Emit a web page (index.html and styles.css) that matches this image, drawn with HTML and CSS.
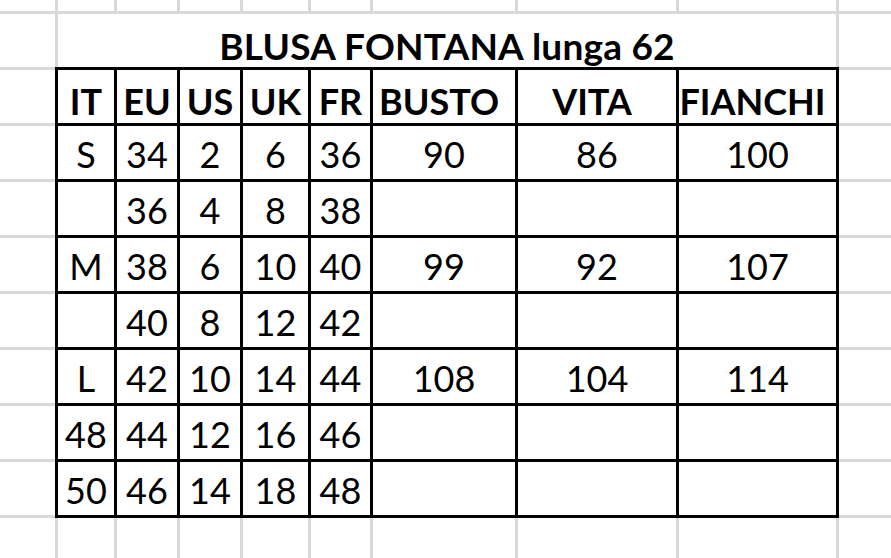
FILE: index.html
```html
<!DOCTYPE html>
<html lang="it">
<head>
<meta charset="utf-8">
<title>BLUSA FONTANA lunga 62</title>
<link rel="stylesheet" href="styles.css">
</head>
<body>
<div class="sheet">
  <div class="title">BLUSA FONTANA lunga 62</div>
  <div class="table">
    <div class="cell head">IT</div><div class="cell head">EU</div><div class="cell head">US</div><div class="cell head">UK</div><div class="cell head">FR</div><div class="cell head wide">BUSTO</div><div class="cell head wide">VITA</div><div class="cell head wide">FIANCHI</div>

    <div class="cell">S</div><div class="cell">34</div><div class="cell">2</div><div class="cell">6</div><div class="cell">36</div><div class="cell">90</div><div class="cell">86</div><div class="cell">100</div>

    <div class="cell"></div><div class="cell">36</div><div class="cell">4</div><div class="cell">8</div><div class="cell">38</div><div class="cell"></div><div class="cell"></div><div class="cell"></div>

    <div class="cell">M</div><div class="cell">38</div><div class="cell">6</div><div class="cell">10</div><div class="cell">40</div><div class="cell">99</div><div class="cell">92</div><div class="cell">107</div>

    <div class="cell"></div><div class="cell">40</div><div class="cell">8</div><div class="cell">12</div><div class="cell">42</div><div class="cell"></div><div class="cell"></div><div class="cell"></div>

    <div class="cell">L</div><div class="cell">42</div><div class="cell">10</div><div class="cell">14</div><div class="cell">44</div><div class="cell">108</div><div class="cell">104</div><div class="cell">114</div>

    <div class="cell">48</div><div class="cell">44</div><div class="cell">12</div><div class="cell">16</div><div class="cell">46</div><div class="cell"></div><div class="cell"></div><div class="cell"></div>

    <div class="cell">50</div><div class="cell">46</div><div class="cell">14</div><div class="cell">18</div><div class="cell">48</div><div class="cell"></div><div class="cell"></div><div class="cell"></div>
  </div>
</div>
</body>
</html>
```

FILE: styles.css
```css
html, body {
  margin: 0;
  padding: 0;
  background: #ffffff;
}

.sheet {
  box-sizing: border-box;
  width: 891px;
  height: 558px;
  overflow: hidden;
  padding: 11px 0 0 55px;
  font-family: Lato, "Open Sans", sans-serif;
  color: #000;
  background:
    linear-gradient(#d9d9d9, #d9d9d9) 55px 0 / 3px 100% no-repeat,
    linear-gradient(#d9d9d9, #d9d9d9) 114px 0 / 3px 100% no-repeat,
    linear-gradient(#d9d9d9, #d9d9d9) 177px 0 / 3px 100% no-repeat,
    linear-gradient(#d9d9d9, #d9d9d9) 240px 0 / 3px 100% no-repeat,
    linear-gradient(#d9d9d9, #d9d9d9) 308px 0 / 3px 100% no-repeat,
    linear-gradient(#d9d9d9, #d9d9d9) 370px 0 / 3px 100% no-repeat,
    linear-gradient(#d9d9d9, #d9d9d9) 515px 0 / 3px 100% no-repeat,
    linear-gradient(#d9d9d9, #d9d9d9) 676px 0 / 3px 100% no-repeat,
    linear-gradient(#d9d9d9, #d9d9d9) 836px 0 / 3px 100% no-repeat,
    repeating-linear-gradient(to bottom, transparent 0 11px, #d9d9d9 11px 14px, transparent 14px 56px) 0 0 / 100% 100%,
    #ffffff;
}

.title {
  width: 778px;
  height: 53px;
  margin: 3px 0 0 3px;
  background: #fff;
  display: flex;
  align-items: flex-end;
  justify-content: center;
  box-sizing: border-box;
  padding: 0 0 3px 0;
  font-weight: 700;
  font-size: 37px;
  line-height: 37px;
  letter-spacing: 0.2px;
}

.table {
  display: grid;
  width: max-content;
  grid-template-columns: 56px 60px 60px 65px 59px 142px 158px 157px;
  grid-auto-rows: 53px;
  gap: 3px;
  padding: 3px;
  background: #000;
}

.cell {
  background: #fff;
  display: flex;
  align-items: flex-end;
  justify-content: center;
  box-sizing: border-box;
  padding-bottom: 7px;
  font-size: 36px;
  line-height: 36px;
  white-space: nowrap;
}

.head {
  font-weight: 700;
  padding-bottom: 4px;
}

.head.wide {
  padding-right: 10px;
}
```
